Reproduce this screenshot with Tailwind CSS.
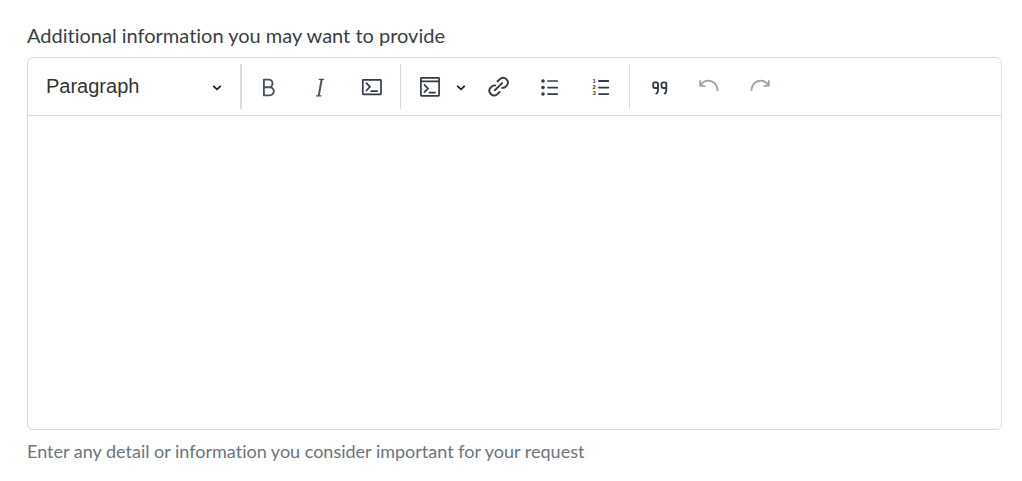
<!DOCTYPE html>
<html lang="en">
<head>
    <meta charset="UTF-8">
    <meta name="viewport" content="width=device-width, initial-scale=1.0">
    <title>Additional information</title>
    <script src="https://cdn.jsdelivr.net/npm/@tailwindcss/browser@4"></script>
</head>
<body class="bg-white font-['Lato','Open_Sans',sans-serif] [font-variant-ligatures:none]">
    <div class="pl-[27px] pr-5 pt-[21px] pb-4">
        <label for="info" class="block text-[20px] leading-7 text-[#3a3f45] mb-2">Additional information you may want to provide</label>

        <div class="border border-[#d8dadc] rounded-md overflow-hidden">
            <!-- Toolbar -->
            <div class="flex items-center py-1.5 border-b border-[#d8dadc] text-[#333c46]">
                <div class="relative w-[212px]">
                    <select aria-label="Heading" class="appearance-none w-full h-[45px] pl-[18px] pr-10 pb-0.5 bg-transparent font-['Liberation_Sans',sans-serif] text-[20px] text-[#333]">
                        <option>Paragraph</option>
                        <option>Heading 1</option>
                        <option>Heading 2</option>
                        <option>Heading 3</option>
                    </select>
                    <svg class="absolute right-[17px] top-[18px] w-3 h-3 pointer-events-none text-[#222]" viewBox="0 0 12 12" fill="none" stroke="currentColor" stroke-width="1.8"><path d="M2.2 3.8 6 7.3l3.8-3.5"/></svg>
                </div>

                <div class="flex gap-1.5 pl-1 pr-[7px] border-l-2 border-[#d8dbe0]">
                    <button type="button" aria-label="Bold" class="flex items-center justify-center w-[45px] h-[45px] rounded-sm hover:bg-gray-100">
                        <svg class="w-[25px] h-[25px] text-[#4a525b]" viewBox="0 0 25 25" fill="none" stroke="currentColor" stroke-width="1.9" stroke-linejoin="round"><path d="M7.9 5.6h4.8a3.8 3.8 0 0 1 0 7.6H7.9zM7.9 13.2h5.8a4.1 4.1 0 0 1 0 8.2H7.9z"/></svg>
                    </button>
                    <button type="button" aria-label="Italic" class="flex items-center justify-center w-[45px] h-[45px] rounded-sm hover:bg-gray-100">
                        <svg class="w-[25px] h-[25px] text-[#4a525b]" viewBox="0 0 25 25" fill="none" stroke="currentColor"><path stroke-width="1.3" d="M11.7 5.3h5.4M9 21.9h5.4"/><path stroke-width="2" d="M14.7 5.3l-3 16.6"/></svg>
                    </button>
                    <button type="button" aria-label="Code" class="flex items-center justify-center w-[45px] h-[45px] rounded-sm hover:bg-gray-100">
                        <svg class="w-[25px] h-[25px]" viewBox="0 0 25 25" fill="none" stroke="currentColor" stroke-width="1.7"><rect x="4.8" y="5.8" width="18.2" height="14.6" rx=".6"/><path d="M8 8.6l4 4.2-4 4.2M12.6 17.1h7.2"/></svg>
                    </button>
                </div>

                <div class="flex gap-1.5 px-1.5 border-l border-[#d8dbe0]">
                    <div class="flex">
                        <button type="button" aria-label="Insert code block" class="flex items-center justify-center w-[45px] h-[45px] rounded-sm hover:bg-gray-100">
                            <svg class="w-[25px] h-[25px]" viewBox="0 0 25 25" fill="none" stroke="currentColor" stroke-width="1.7"><rect x="3.9" y="3.9" width="18.2" height="18" rx=".6"/><path d="M3.9 7.4h18.2M7 10.4l4 4.1-4 4.1M11.8 18.6h7"/></svg>
                        </button>
                        <button type="button" aria-label="Code block language" class="flex items-center justify-center w-[18px] h-[45px] rounded-sm hover:bg-gray-100">
                            <svg class="w-3 h-3 text-[#222]" viewBox="0 0 12 12" fill="none" stroke="currentColor" stroke-width="1.8"><path d="M2.2 4.8 6 8.3l3.8-3.5"/></svg>
                        </button>
                    </div>
                    <button type="button" aria-label="Link" class="flex items-center justify-center w-[45px] h-[45px] rounded-sm hover:bg-gray-100">
                        <svg class="w-[25px] h-[25px]" viewBox="0 0 25 25" fill="none" stroke="currentColor" stroke-width="1.9" stroke-linecap="round"><path d="M8.8 16.2l7.4-7.1M11.6 7.3l2.6-2.4a4.7 4.7 0 0 1 6.6 6.6l-1.7 1.6a4.7 4.7 0 0 1-3 .8M13.6 18l-2.6 2.4a4.7 4.7 0 0 1-6.6-6.6l1.7-1.6a4.7 4.7 0 0 1 3-.8"/></svg>
                    </button>
                    <button type="button" aria-label="Bulleted list" class="flex items-center justify-center w-[45px] h-[45px] rounded-sm hover:bg-gray-100">
                        <svg class="w-[25px] h-[25px]" viewBox="0 0 25 25" fill="currentColor" stroke="none"><circle cx="6" cy="7" r="1.8"/><circle cx="6" cy="13.5" r="1.8"/><circle cx="6" cy="20" r="1.8"/><path fill="none" stroke="currentColor" stroke-width="1.7" stroke-linecap="round" d="M11 7h9.3M11 13.6h9.3M11 20.1h9.3"/></svg>
                    </button>
                    <button type="button" aria-label="Numbered list" class="flex items-center justify-center w-[45px] h-[45px] rounded-sm hover:bg-gray-100">
                        <svg class="w-[25px] h-[25px] font-['Liberation_Sans',sans-serif] font-bold text-[6px]" viewBox="0 0 25 25" fill="currentColor"><text x="4.4" y="8.5">1</text><text x="4.4" y="15">2</text><text x="4.4" y="21.3">3</text><path fill="none" stroke="currentColor" stroke-width="1.8" stroke-linecap="round" d="M11 7h9.3M11 13.6h9.3M11 20.1h9.3"/></svg>
                    </button>
                </div>

                <div class="flex gap-1.5 px-1.5 border-l border-[#d8dbe0]">
                    <button type="button" aria-label="Block quote" class="flex items-center justify-center w-[45px] h-[45px] rounded-sm hover:bg-gray-100">
                        <svg class="w-[25px] h-[25px]" viewBox="0 0 25 25" fill="none" stroke="currentColor" stroke-width="1.9" stroke-linecap="round"><path d="M12 14H8.6a1.4 1.4 0 0 1-1.4-1.4V9.8a1.4 1.4 0 0 1 1.4-1.4h2A1.4 1.4 0 0 1 12 9.8v6.2q0 2.4-1.6 3.6M20.3 14h-3.4a1.4 1.4 0 0 1-1.4-1.4V9.8a1.4 1.4 0 0 1 1.4-1.4h2a1.4 1.4 0 0 1 1.4 1.4v6.2q0 2.4-1.6 3.6"/></svg>
                    </button>
                    <button type="button" aria-label="Undo" disabled class="flex items-center justify-center w-[45px] h-[45px] rounded-sm text-[#9da1a5]">
                        <svg class="w-[25px] h-[25px]" viewBox="0 0 25 25" fill="none" stroke="currentColor" stroke-width="1.8"><path d="M3.2 6.2v5.4l5.2.6M3.4 11.4C6.2 7.4 10.2 5.8 14.2 7.2c4 1.4 6.2 5 6.4 9.8"/></svg>
                    </button>
                    <button type="button" aria-label="Redo" disabled class="flex items-center justify-center w-[45px] h-[45px] rounded-sm text-[#9da1a5]">
                        <svg class="w-[25px] h-[25px]" viewBox="0 0 25 25" fill="none" stroke="currentColor" stroke-width="1.8"><path d="M20.8 6.2v5.4l-5.2.6M20.6 11.4C17.8 7.4 13.8 5.8 9.8 7.2c-4 1.4-6.2 5-6.4 9.8"/></svg>
                    </button>
                </div>
            </div>

            <textarea id="info" aria-describedby="info-help" class="block w-full h-[313px] px-[18px] py-4 text-[18px] resize-none outline-none"></textarea>
        </div>

        <p id="info-help" class="mt-[7px] text-[18px] leading-7 text-[#6c757d]">Enter any detail or information you consider important for your request</p>
    </div>
</body>
</html>
